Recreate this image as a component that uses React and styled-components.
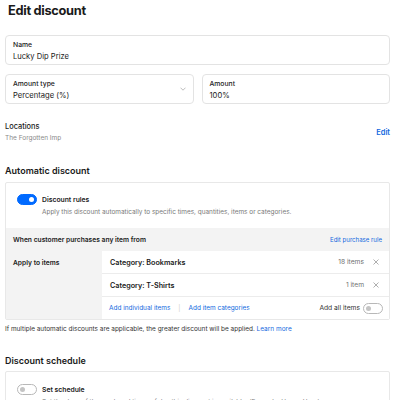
import styled, { createGlobalStyle } from "styled-components";

const Global = createGlobalStyle`
  body {
    margin: 0;
    background: #fff;
    font-family: Inter, "Liberation Sans", sans-serif;
    color: #1a1a1a;
  }
`;

const Page = styled.div`
  width: 394px;
  height: 400px;
  overflow: hidden;
  padding: 0 4px 0 5px;
  box-sizing: border-box;
`;

const Title = styled.h1`
  margin: 0 0 0 3px;
  padding-top: 3px;
  height: 32px;
  font-size: 12.8px;
  font-weight: 700;
  letter-spacing: -0.3px;
  line-height: 15px;
`;

const Field = styled.div`
  border: 1px solid #e3e3e3;
  border-radius: 4px;
  height: 30px;
  box-sizing: border-box;
  padding: 4px 7px 0;
  position: relative;
  display: flex;
  flex-direction: column;
  gap: 2px;
`;

const FieldLabel = styled.div`
  font-size: 6.8px;
  font-weight: 500;
  line-height: 9px;
`;

const FieldValue = styled.div`
  font-size: 7.6px;
  line-height: 11px;
`;

const Chevron = styled.svg`
  position: absolute;
  right: 7px;
  top: 12px;
`;

const FieldRow = styled.div`
  display: grid;
  grid-template-columns: 1fr 1fr;
  gap: 8px;
  margin-top: 9px;
`;

const LocationRow = styled.div`
  display: flex;
  justify-content: space-between;
  align-items: center;
  margin-top: 18px;
`;

const LocTitle = styled.div`
  font-size: 7.4px;
  font-weight: 500;
  line-height: 9px;
`;

const Muted = styled.div`
  font-size: 6.5px;
  color: #8a8a8a;
  line-height: 9px;
  margin-top: 3px;
`;

const Link = styled.span`
  color: #1369e0;
  font-size: ${p => p.$size || 6.5}px;
  font-weight: ${p => (p.$bold ? 600 : 400)};
`;

const SectionTitle = styled.h2`
  margin: ${p => p.$top}px 0 ${p => p.$bottom}px;
  font-size: 9px;
  font-weight: 600;
  line-height: 12px;
`;

const Card = styled.div`
  border: 1px solid #e8e8e8;
  border-radius: 2px;
`;

const RuleHead = styled.div`
  display: flex;
  gap: 5px;
  padding: ${p => p.$pad || "11px 11px 11px"};
  align-items: flex-start;
`;

const Toggle = styled.div`
  width: 20px;
  height: 11px;
  border-radius: 6px;
  box-sizing: border-box;
  flex-shrink: 0;
  position: relative;
  background: ${p => (p.$on ? "#006aff" : "#fff")};
  border: 1px solid ${p => (p.$on ? "#006aff" : "#b8b8b8")};
  &::after {
    content: "";
    position: absolute;
    top: 2px;
    ${p => (p.$on ? "right: 2px;" : "left: 2px;")}
    width: 5px;
    height: 5px;
    border-radius: 50%;
    background: ${p => (p.$on ? "#fff" : "#c4c4c4")};
  }
`;

const RuleText = styled.div`
  display: flex;
  flex-direction: column;
  gap: 2px;
  padding-top: 1px;
`;

const RuleTitle = styled.div`
  font-size: 6.8px;
  font-weight: 600;
  line-height: 10px;
`;

const RuleDesc = styled.div`
  font-size: 6.45px;
  color: #7a7a7a;
  line-height: 10px;
  white-space: nowrap;
`;

const Grey = styled.div`
  background: #f3f3f3;
`;

const GreyHead = styled.div`
  display: flex;
  justify-content: space-between;
  align-items: center;
  height: 23px;
  padding: 0 7px;
  font-size: 6.7px;
  font-weight: 600;
`;

const ApplyGrid = styled.div`
  display: grid;
  grid-template-columns: 96px 1fr;
`;

const ApplyLabel = styled.div`
  font-size: 6.7px;
  font-weight: 600;
  line-height: 10px;
  padding: 7px 7px;
`;

const Items = styled.div`
  background: #fff;
`;

const ItemRow = styled.div`
  display: flex;
  align-items: center;
  height: 22px;
  padding: 0 10px 0 8px;
  font-size: 6.7px;
  border-bottom: 1px solid #ececec;
  &:last-child {
    border-bottom: none;
    padding-right: 6px;
    padding-left: 7px;
  }
`;

const ItemName = styled.span`
  font-weight: 600;
  font-size: 7.2px;
  flex: 1;
`;

const Count = styled.span`
  color: #707070;
  margin-right: 9px;
`;

const Sep = styled.span`
  color: #d0d0d0;
  margin: 0 8px;
`;

const AddAll = styled.span`
  margin-left: auto;
  margin-right: 3px;
  color: #333;
`;

const Note = styled.div`
  font-size: 6.45px;
  color: #333;
  margin-top: 4px;
  line-height: 10px;
`;

const X = () => (
  <svg width="6" height="6" viewBox="0 0 6 6">
    <path d="M0.5 0.5 L5.5 5.5 M5.5 0.5 L0.5 5.5" stroke="#9a9a9a" strokeWidth="0.8" />
  </svg>
);

export default function App() {
  return (
    <Page>
      <Global />
      <Title>Edit discount</Title>

      <Field>
        <FieldLabel>Name</FieldLabel>
        <FieldValue>Lucky Dip Prize</FieldValue>
      </Field>

      <FieldRow>
        <Field>
          <FieldLabel>Amount type</FieldLabel>
          <FieldValue>Percentage (%)</FieldValue>
          <Chevron width="6" height="4" viewBox="0 0 6 4">
            <path d="M0.5 0.7 L3 3.2 L5.5 0.7" fill="none" stroke="#a0a0a0" strokeWidth="0.7" />
          </Chevron>
        </Field>
        <Field>
          <FieldLabel>Amount</FieldLabel>
          <FieldValue>100%</FieldValue>
        </Field>
      </FieldRow>

      <LocationRow>
        <div>
          <LocTitle>Locations</LocTitle>
          <Muted>The Forgotten Imp</Muted>
        </div>
        <Link $bold $size={7.5}>Edit</Link>
      </LocationRow>

      <SectionTitle $top={22} $bottom={5}>Automatic discount</SectionTitle>
      <Card>
        <RuleHead>
          <Toggle $on />
          <RuleText>
            <RuleTitle>Discount rules</RuleTitle>
            <RuleDesc>Apply this discount automatically to specific times, quantities, items or categories.</RuleDesc>
          </RuleText>
        </RuleHead>
        <Grey>
          <GreyHead>
            <span>When customer purchases any item from</span>
            <Link $size={6.1}>Edit purchase rule</Link>
          </GreyHead>
          <ApplyGrid>
            <ApplyLabel>Apply to items</ApplyLabel>
            <Items>
              <ItemRow>
                <ItemName>Category: Bookmarks</ItemName>
                <Count>18 items</Count>
                <X />
              </ItemRow>
              <ItemRow>
                <ItemName>Category: T-Shirts</ItemName>
                <Count>1 item</Count>
                <X />
              </ItemRow>
              <ItemRow>
                <Link $size={6.45}>Add individual items</Link>
                <Sep>|</Sep>
                <Link $size={6.45}>Add item categories</Link>
                <AddAll>Add all items</AddAll>
                <Toggle />
              </ItemRow>
            </Items>
          </ApplyGrid>
        </Grey>
      </Card>
      <Note>
        If multiple automatic discounts are applicable, the greater discount will be applied. <Link>Learn more</Link>
      </Note>

      <SectionTitle $top={21} $bottom={4}>Discount schedule</SectionTitle>
      <Card>
        <RuleHead $pad="12px 11px 11px">
          <Toggle />
          <RuleText>
            <RuleTitle>Set schedule</RuleTitle>
            <RuleDesc>Set the days of the week and times of day this discount is available. (Example: Happy Hour)</RuleDesc>
          </RuleText>
        </RuleHead>
      </Card>
    </Page>
  );
}
